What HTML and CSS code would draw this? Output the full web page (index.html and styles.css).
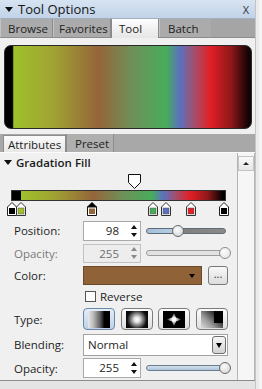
FILE: index.html
```html
<!DOCTYPE html>
<html lang="en">
<head>
    <meta charset="UTF-8">
    <meta name="viewport" content="width=device-width, initial-scale=1.0">
    <title>Tool Options</title>
    <link rel="stylesheet" href="styles.css">
</head>
<body>
    <div class="window">
        <div class="main">
            <div class="titlebar">
                <span class="title-arrow"></span>
                <span class="title">Tool Options</span>
                <span class="close">X</span>
            </div>
            <div class="tabs">
                <div class="tab tab-browse">Browse</div>
                <div class="tab tab-fav">Favorites</div>
                <div class="tab tab-tool active">Tool</div>
                <div class="tab tab-batch">Batch</div>
            </div>
            <div class="content">
                <div class="preview"></div>

                <div class="subtabs">
                    <div class="subtab subtab-attr active">Attributes</div>
                    <div class="subtab subtab-preset">Preset</div>
                </div>

                <div class="section">
                    <div class="section-body">
                        <div class="section-head"><span class="head-arrow"></span>Gradation Fill</div>

                        <!-- gradient editor: markers sit at their stop positions -->
                        <div class="editor">
                            <svg class="opacity-stop" style="left: 128px" width="13" height="15" viewBox="0 0 13 15">
                                <path d="M0.5 0.5 H12.5 V8.5 L6.5 14.5 L0.5 8.5 Z" fill="#fff" stroke="#111"/>
                            </svg>
                            <div class="bar"></div>
                            <svg class="stop" style="left: 7px" width="10" height="14" viewBox="0 0 10 14">
                                <path d="M5 0.5 L9.5 5 V13.5 H0.5 V5 Z" fill="#fff" stroke="#222"/>
                                <rect x="2" y="6" width="6" height="6" fill="#000"/>
                            </svg>
                            <svg class="stop" style="left: 16px" width="10" height="14" viewBox="0 0 10 14">
                                <path d="M5 0.5 L9.5 5 V13.5 H0.5 V5 Z" fill="#fff" stroke="#333"/>
                                <rect x="2" y="6" width="6" height="6" fill="#9fc12b" stroke="#555" stroke-width="0.5"/>
                            </svg>
                            <svg class="stop" style="left: 87px" width="10" height="14" viewBox="0 0 10 14">
                                <path d="M5 0.5 L9.5 5 H0.5 Z" fill="#000" stroke="#000"/>
                                <path d="M0.5 5 H9.5 V13.5 H0.5 Z" fill="#fff" stroke="#111"/>
                                <rect x="2" y="6.5" width="6" height="5.5" fill="#95653a"/>
                            </svg>
                            <svg class="stop" style="left: 148px" width="10" height="14" viewBox="0 0 10 14">
                                <path d="M5 0.5 L9.5 5 V13.5 H0.5 V5 Z" fill="#fff" stroke="#333"/>
                                <rect x="2" y="6" width="6" height="6" fill="#47ad5a" stroke="#555" stroke-width="0.5"/>
                            </svg>
                            <svg class="stop" style="left: 161px" width="10" height="14" viewBox="0 0 10 14">
                                <path d="M5 0.5 L9.5 5 V13.5 H0.5 V5 Z" fill="#fff" stroke="#333"/>
                                <rect x="2" y="6" width="6" height="6" fill="#5a72c0" stroke="#555" stroke-width="0.5"/>
                            </svg>
                            <svg class="stop" style="left: 186px" width="10" height="14" viewBox="0 0 10 14">
                                <path d="M5 0.5 L9.5 5 V13.5 H0.5 V5 Z" fill="#fff" stroke="#333"/>
                                <rect x="2" y="6" width="6" height="6" fill="#e21f26" stroke="#555" stroke-width="0.5"/>
                            </svg>
                            <svg class="stop" style="left: 219px" width="10" height="14" viewBox="0 0 10 14">
                                <path d="M5 0.5 L9.5 5 V13.5 H0.5 V5 Z" fill="#fff" stroke="#222"/>
                                <rect x="2" y="6" width="6" height="6" fill="#000"/>
                            </svg>
                        </div>

                        <div class="form">
                            <div class="label">Position:</div>
                            <div class="control">
                                <div class="spin-field">
                                    <span class="spin-value">98</span>
                                    <span class="spin"><i class="up"></i><i class="down"></i></span>
                                </div>
                                <div class="slider slider-pos">
                                    <div class="track"></div>
                                    <div class="thumb" style="left: 26px"></div>
                                </div>
                            </div>

                            <div class="label disabled">Opacity:</div>
                            <div class="control">
                                <div class="spin-field disabled">
                                    <span class="spin-value">255</span>
                                    <span class="spin"><i class="up"></i><i class="down"></i></span>
                                </div>
                                <div class="slider slider-off">
                                    <div class="track"></div>
                                    <div class="thumb" style="left: 73px"></div>
                                </div>
                            </div>

                            <div class="label">Color:</div>
                            <div class="control">
                                <div class="color-box"><span class="drop-arrow"></span></div>
                                <div class="more-btn">...</div>
                            </div>

                            <div class="label"></div>
                            <div class="control">
                                <span class="checkbox"></span>
                                <span class="check-text">Reverse</span>
                            </div>

                            <div class="label">Type:</div>
                            <div class="control type-row">
                                <div class="type-btn selected"><span class="type-icon icon-linear"></span></div>
                                <div class="type-btn"><span class="type-icon icon-radial"></span></div>
                                <div class="type-btn">
                                    <svg class="type-svg" width="22" height="17" viewBox="0 0 22 17">
                                        <defs>
                                            <radialGradient id="glow">
                                                <stop offset="0" stop-color="#fff"/>
                                                <stop offset="0.45" stop-color="#fff" stop-opacity="0.75"/>
                                                <stop offset="1" stop-color="#fff" stop-opacity="0"/>
                                            </radialGradient>
                                        </defs>
                                        <rect width="22" height="17" fill="#000"/>
                                        <path d="M11 1.5 L13 6.5 L18.5 8.5 L13 10.5 L11 15.5 L9 10.5 L3.5 8.5 L9 6.5 Z" fill="url(#glow)"/>
                                        <circle cx="11" cy="8.5" r="2.2" fill="#fff"/>
                                    </svg>
                                </div>
                                <div class="type-btn"><span class="type-icon icon-rect"><span class="rect-block"></span></span></div>
                            </div>

                            <div class="label">Blending:</div>
                            <div class="control">
                                <div class="select">
                                    <span class="select-value">Normal</span>
                                    <span class="select-btn"><span class="drop-arrow"></span></span>
                                </div>
                            </div>

                            <div class="label">Opacity:</div>
                            <div class="control">
                                <div class="spin-field">
                                    <span class="spin-value">255</span>
                                    <span class="spin"><i class="up"></i><i class="down"></i></span>
                                </div>
                                <div class="slider slider-full">
                                    <div class="track"></div>
                                    <div class="thumb" style="left: 73px"></div>
                                </div>
                            </div>
                        </div>
                    </div>
                    <div class="scrollbar">
                        <div class="scroll-up"></div>
                    </div>
                </div>
                <div class="footer"></div>
            </div>
        </div>
        <div class="edge"></div>
    </div>
</body>
</html>
```

FILE: styles.css
```css
* {
    box-sizing: border-box;
}

body {
    margin: 0;
    width: 262px;
    height: 389px;
    overflow: hidden;
    font-family: "Open Sans", "Noto Sans", sans-serif;
    font-size: 11px;
    color: #1e1e1e;
    background: #e2e2e2;
}

.window {
    display: flex;
    height: 389px;
}

.main {
    width: 255px;
    display: flex;
    flex-direction: column;
}

.edge {
    width: 7px;
    background: #ebebeb;
    border-left: 1px solid #c4c4c4;
    border-right: 3px solid #f4f4f4;
}

/* title bar */
.titlebar {
    height: 19px;
    display: flex;
    align-items: center;
    background: linear-gradient(#d6e3f2, #c2d3e8);
    border-bottom: 1px solid #9fb0c4;
    padding-left: 5px;
}

.title-arrow {
    width: 0;
    height: 0;
    border-left: 4px solid transparent;
    border-right: 4px solid transparent;
    border-top: 5px solid #111;
    margin-right: 5px;
}

.title {
    font-size: 13px;
    color: #151515;
    flex: 1;
}

.close {
    font-size: 11px;
    color: #333;
    margin-right: 6px;
}

/* main tabs */
.tabs {
    height: 19px;
    display: flex;
    background: #a5a5a5;
    border-bottom: 1px solid #8c8c8c;
}

.tab {
    display: flex;
    align-items: center;
    padding-left: 7px;
    background: #ababab;
    border-right: 1px solid #8a8a8a;
    border-left: 1px solid #c4c4c4;
    font-size: 11.5px;
}

.tab-browse { width: 53px; }
.tab-fav { width: 58px; padding-left: 5px; }
.tab-tool { width: 48px; padding-left: 7px; }
.tab-batch { width: 52px; padding-left: 8px; border-right: none; }

.tab.active {
    background: linear-gradient(#fdfdfd, #e6e6e6);
    border-left: 1px solid #8a8a8a;
    margin-bottom: -1px;
}

.content {
    flex: 1;
    background: #f0f0f0;
    display: flex;
    flex-direction: column;
}

/* gradient preview */
.preview {
    margin: 7px 0 0 4px;
    width: 248px;
    height: 84px;
    border: 1px solid #2a2a2a;
    border-radius: 7px;
    background: linear-gradient(90deg, #000 0, #000 3%, #9fc12b 3.6%, #a0a232 20%, #95653a 38%, #6e9159 52%, #47ad5a 65.5%, #5a72c0 71%, #a44e6c 77%, #e21f26 83.5%, #8e1719 92%, #120404 99%);
}

/* sub tabs */
.subtabs {
    margin-top: 5px;
    height: 19px;
    display: flex;
    background: #a8a8a8;
    padding-left: 3px;
    border-bottom: 1px solid #fbfbfb;
}

.subtab {
    display: flex;
    align-items: center;
    font-size: 11.5px;
}

.subtab-attr {
    width: 63px;
    padding-left: 4px;
}

.subtab-preset {
    padding-left: 8px;
    width: 48px;
    background: #afafaf;
    border-left: 1px solid #8c8c8c;
    border-right: 1px solid #8c8c8c;
}

.subtab.active {
    background: linear-gradient(#fafafa, #e8e8e8);
    border: 1px solid #8c8c8c;
    border-bottom: none;
    margin-top: 1px;
}

/* gradation fill section */
.section {
    display: flex;
    height: 227px;
}

.section-body {
    width: 237px;
}

.section-head {
    height: 19px;
    display: flex;
    align-items: center;
    padding-left: 4px;
    font-size: 11.5px;
    font-weight: 600;
    color: #1a1a1a;
}

.head-arrow {
    width: 0;
    height: 0;
    border-left: 4px solid transparent;
    border-right: 4px solid transparent;
    border-top: 5px solid #111;
    margin-right: 4px;
}

.editor {
    position: relative;
    height: 47px;
    padding-top: 18px;
}

.opacity-stop {
    position: absolute;
    top: 2px;
}

.bar {
    margin-left: 11px;
    width: 215px;
    height: 11px;
    border: 1px solid #333;
    background: linear-gradient(90deg, #000 0, #000 4%, #9fc12b 4.3%, #a0a232 20%, #95653a 38%, #6e9159 52%, #47ad5a 65.5%, #5a72c0 71%, #a44e6c 77%, #e21f26 83.5%, #8e1719 92%, #000 99%);
}

.stop {
    position: absolute;
    top: 30px;
}

/* form rows */
.form {
    display: grid;
    grid-template-columns: 69px 150px;
    grid-template-rows: 23px 22px 23px 18px 28px 23px 24px;
    padding-left: 14px;
    align-items: center;
}

.label {
    font-size: 11.5px;
    color: #1e1e1e;
}

.label.disabled {
    color: #7a7a7a;
}

.control {
    display: flex;
    align-items: center;
}

.spin-field {
    width: 58px;
    height: 20px;
    display: flex;
    background: #fff;
    border: 1px solid #a9a9a9;
}

.spin-value {
    flex: 1;
    text-align: right;
    padding-right: 8px;
    line-height: 18px;
    font-size: 11.5px;
}

.spin {
    width: 13px;
    display: flex;
    flex-direction: column;
    justify-content: center;
    align-items: center;
    gap: 4px;
}

.spin i {
    width: 0;
    height: 0;
    border-left: 3px solid transparent;
    border-right: 3px solid transparent;
}

.spin .up {
    border-bottom: 4px solid #111;
}

.spin .down {
    border-top: 4px solid #111;
}

.spin-field.disabled {
    background: #ededed;
    border-color: #c2c2c2;
    height: 19px;
    color: #6e6e6e;
}

.spin-field.disabled .spin-value {
    line-height: 17px;
}

.spin-field.disabled .up {
    border-bottom-color: #8a8a8a;
}

.spin-field.disabled .down {
    border-top-color: #8a8a8a;
}

.slider {
    position: relative;
    width: 80px;
    height: 12px;
    margin-left: 5px;
}

.track {
    margin-top: 3px;
    height: 6px;
    border-radius: 3px;
    border: 1px solid #6d6d6d;
}

.slider-pos .track {
    background: linear-gradient(90deg, #a4bfd8 0, #b9cfe3 38%, #7e7e7e 38%, #8a8a8a 100%);
    border-color: #5e6b78;
}

.slider-off .track {
    background: #e2e2e2;
    border-color: #9b9b9b;
}

.slider-full .track {
    background: linear-gradient(#d3e0ec, #aec5da);
    border-color: #6a7d91;
}

.thumb {
    position: absolute;
    top: 0;
    width: 12px;
    height: 12px;
    border-radius: 50%;
    background: radial-gradient(circle at 40% 35%, #fbfbfb, #cfcfcf);
    border: 1px solid #6a6a6a;
}

.slider-off .thumb {
    border-color: #8d8d8d;
    background: radial-gradient(circle at 40% 35%, #fdfdfd, #dedede);
}

.color-box {
    position: relative;
    width: 119px;
    height: 19px;
    background: #8f6237;
    border: 1px solid #6a4a2a;
}

.drop-arrow {
    position: absolute;
    width: 0;
    height: 0;
    border-left: 3px solid transparent;
    border-right: 3px solid transparent;
    border-top: 4px solid #000;
}

.color-box .drop-arrow {
    right: 6px;
    top: 7px;
}

.more-btn {
    margin-left: 6px;
    width: 20px;
    height: 19px;
    border: 1px solid #7a7a7a;
    border-radius: 3px;
    background: linear-gradient(#f8f8f8, #dcdcdc);
    text-align: center;
    line-height: 14px;
    font-size: 11px;
    color: #333;
}

.checkbox {
    margin-left: 2px;
    width: 11px;
    height: 11px;
    border: 1px solid #555;
    background: #fdfdfd;
}

.check-text {
    margin-left: 4px;
    font-size: 11.5px;
}

.type-row {
    width: 145px;
    justify-content: space-between;
}

.type-btn {
    width: 32px;
    height: 22px;
    border: 1px solid #7c7c7c;
    border-radius: 4px;
    background: linear-gradient(#fbfbfb, #dedede);
    display: flex;
    align-items: center;
    justify-content: center;
}

.type-btn.selected {
    background: linear-gradient(#e4eef8, #bcd1e8);
    border-color: #6d87a6;
}

.type-icon {
    position: relative;
    width: 22px;
    height: 17px;
    background: #000;
}

.icon-linear {
    background: linear-gradient(90deg, #e9e9e9 0, #b9b9b9 25%, #5e5e5e 55%, #000 75%);
}

.icon-radial {
    background: radial-gradient(circle at 50% 50%, #fff 0, #e8e8e8 18%, #7a7a7a 45%, #111 70%, #000 100%);
}

.icon-rect {
    background: linear-gradient(45deg, #dcdcdc 0, #9a9a9a 35%, #333 70%, #000 100%);
}

.rect-block {
    position: absolute;
    right: 0;
    top: 0;
    width: 9px;
    height: 12px;
    background: #000;
}

.select {
    position: relative;
    width: 145px;
    height: 22px;
    background: #fff;
    border: 1px solid #a3a3a3;
    display: flex;
    align-items: center;
}

.select-value {
    padding-left: 4px;
    font-size: 11.5px;
}

.select-btn {
    position: absolute;
    right: 1px;
    top: 1px;
    width: 14px;
    height: 18px;
    border: 1px solid #6e6e6e;
    border-radius: 3px;
    background: linear-gradient(#f6f6f6, #d3d3d3);
}

.select-btn .drop-arrow {
    left: 3px;
    top: 6px;
    border-left-width: 3.5px;
    border-right-width: 3.5px;
    border-top-width: 5px;
}

/* scrollbar column */
.scrollbar {
    width: 18px;
    background: #f6f6f6;
    border-left: 1px solid #b4b4b4;
    border-right: 1px solid #b4b4b4;
    padding-top: 3px;
}

.scroll-up {
    position: relative;
    height: 15px;
    border: 1px solid #c4c4c4;
    background: linear-gradient(#fafafa, #e6e6e6);
}

.scroll-up::after {
    content: "";
    position: absolute;
    left: 4px;
    top: 5px;
    border-left: 3px solid transparent;
    border-right: 3px solid transparent;
    border-bottom: 3px solid #222;
}

.footer {
    flex: 1;
    border-top: 1px solid #8d8d8d;
    background: #e4e4e4;
}
```
